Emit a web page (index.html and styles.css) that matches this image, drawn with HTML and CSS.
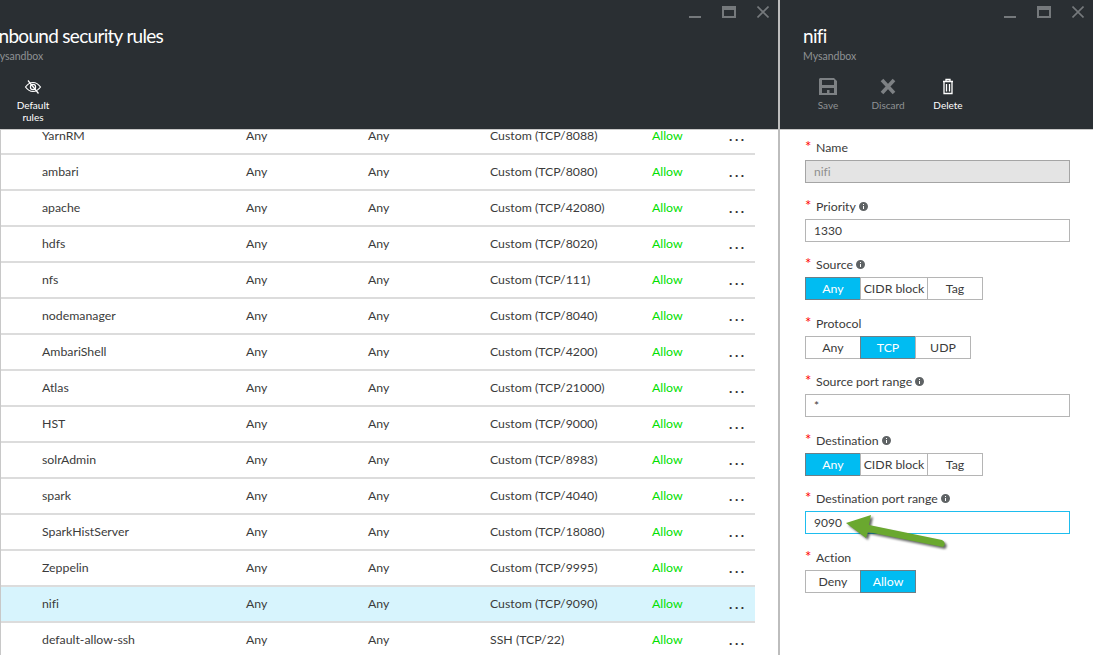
FILE: index.html
```html
<!DOCTYPE html>
<html lang="en">
<head>
  <meta charset="UTF-8">
  <title>Inbound security rules</title>
  <link rel="stylesheet" href="styles.css">
</head>
<body>

  <div class="blade blade-rules">
    <header class="blade-head">
      <div class="win-controls">
        <svg class="win-min" width="12" height="12" viewBox="0 0 12 12"><rect y="10" width="12" height="2"/></svg>
        <svg class="win-max" width="14" height="12" viewBox="0 0 14 12"><path d="M0 0h14v12H0zM2 4v6h10V4z" fill-rule="evenodd"/></svg>
        <svg class="win-close" width="12" height="12" viewBox="0 0 12 12"><path d="M.5.5l11 11M11.5.5l-11 11" fill="none" stroke-width="1.6"/></svg>
      </div>
      <h1 class="title title-clipped">Inbound security rules</h1>
      <div class="subtitle subtitle-clipped">Mysandbox</div>
      <div class="toolbar toolbar-rules">
        <div class="tool tool-on">
          <svg width="18" height="17" viewBox="0 0 18 17" fill="none" stroke="#fff" stroke-width="1.2"><path d="M1.500 9C4 5.500 6.500 4.500 9 4.500S14 5.500 16.500 9C14 12.500 11.500 13.500 9 13.500S4 12.500 1.500 9z"/><circle cx="9" cy="9" r="2.600"/><path d="M4 2.500l10.500 13"/></svg>
          <span>Default rules</span>
        </div>
      </div>
    </header>

    <div class="rules">
      <div class="row"><span>YarnRM</span><span>Any</span><span>Any</span><span>Custom (TCP/8088)</span><span class="allow">Allow</span><span class="dots">...</span></div>
      <div class="row"><span>ambari</span><span>Any</span><span>Any</span><span>Custom (TCP/8080)</span><span class="allow">Allow</span><span class="dots">...</span></div>
      <div class="row"><span>apache</span><span>Any</span><span>Any</span><span>Custom (TCP/42080)</span><span class="allow">Allow</span><span class="dots">...</span></div>
      <div class="row"><span>hdfs</span><span>Any</span><span>Any</span><span>Custom (TCP/8020)</span><span class="allow">Allow</span><span class="dots">...</span></div>
      <div class="row"><span>nfs</span><span>Any</span><span>Any</span><span>Custom (TCP/111)</span><span class="allow">Allow</span><span class="dots">...</span></div>
      <div class="row"><span>nodemanager</span><span>Any</span><span>Any</span><span>Custom (TCP/8040)</span><span class="allow">Allow</span><span class="dots">...</span></div>
      <div class="row"><span>AmbariShell</span><span>Any</span><span>Any</span><span>Custom (TCP/4200)</span><span class="allow">Allow</span><span class="dots">...</span></div>
      <div class="row"><span>Atlas</span><span>Any</span><span>Any</span><span>Custom (TCP/21000)</span><span class="allow">Allow</span><span class="dots">...</span></div>
      <div class="row"><span>HST</span><span>Any</span><span>Any</span><span>Custom (TCP/9000)</span><span class="allow">Allow</span><span class="dots">...</span></div>
      <div class="row"><span>solrAdmin</span><span>Any</span><span>Any</span><span>Custom (TCP/8983)</span><span class="allow">Allow</span><span class="dots">...</span></div>
      <div class="row"><span>spark</span><span>Any</span><span>Any</span><span>Custom (TCP/4040)</span><span class="allow">Allow</span><span class="dots">...</span></div>
      <div class="row"><span>SparkHistServer</span><span>Any</span><span>Any</span><span>Custom (TCP/18080)</span><span class="allow">Allow</span><span class="dots">...</span></div>
      <div class="row"><span>Zeppelin</span><span>Any</span><span>Any</span><span>Custom (TCP/9995)</span><span class="allow">Allow</span><span class="dots">...</span></div>
      <div class="row row-selected"><span>nifi</span><span>Any</span><span>Any</span><span>Custom (TCP/9090)</span><span class="allow">Allow</span><span class="dots">...</span></div>
      <div class="row"><span>default-allow-ssh</span><span>Any</span><span>Any</span><span>SSH (TCP/22)</span><span class="allow">Allow</span><span class="dots">...</span></div>
    </div>
  </div>

  <div class="blade blade-edit">
    <header class="blade-head">
      <div class="win-controls">
        <svg class="win-min" width="12" height="12" viewBox="0 0 12 12"><rect y="10" width="12" height="2"/></svg>
        <svg class="win-max" width="14" height="12" viewBox="0 0 14 12"><path d="M0 0h14v12H0zM2 4v6h10V4z" fill-rule="evenodd"/></svg>
        <svg class="win-close" width="12" height="12" viewBox="0 0 12 12"><path d="M.5.5l11 11M11.5.5l-11 11" fill="none" stroke-width="1.6"/></svg>
      </div>
      <h1 class="title">nifi</h1>
      <div class="subtitle">Mysandbox</div>
      <div class="toolbar">
        <div class="tool">
          <svg width="18" height="17" viewBox="0 0 18 17" fill="#7d8184"><path d="M1 0h14l3 3v14H0V1zM3 2v5h12V2zM3 10v5h3v-5zM6 10v5h6v-5zM12 10v5h3v-5z" fill-rule="evenodd"/><rect x="8" y="12" width="2.500" height="3"/></svg>
          <span>Save</span>
        </div>
        <div class="tool">
          <svg width="18" height="17" viewBox="0 0 18 17" fill="none" stroke="#7d8184" stroke-width="3.600"><path d="M3 2l12 13M15 2L3 15"/></svg>
          <span>Discard</span>
        </div>
        <div class="tool tool-on">
          <svg width="18" height="17" viewBox="0 0 18 17" fill="none" stroke="#fff" stroke-width="1.300"><path d="M4 3.500h10M7 3V1.500h4V3M5 3.500V15.500h8V3.500M7.500 6v7.500M10.500 6v7.500"/></svg>
          <span>Delete</span>
        </div>
      </div>
    </header>

    <form class="form">
      <div class="field">
        <label><i>*</i>Name</label>
        <div class="input input-off">nifi</div>
      </div>
      <div class="field">
        <label><i>*</i>Priority <svg class="info" viewBox="0 0 9 9"><path d="M4.500 0a4.500 4.500 0 1 0 0 9a4.500 4.500 0 0 0 0-9zM4 2h1v1H4zM4 4h1v3H4z" fill-rule="evenodd"/></svg></label>
        <div class="input">1330</div>
      </div>
      <div class="field">
        <label><i>*</i>Source <svg class="info" viewBox="0 0 9 9"><path d="M4.500 0a4.500 4.500 0 1 0 0 9a4.500 4.500 0 0 0 0-9zM4 2h1v1H4zM4 4h1v3H4z" fill-rule="evenodd"/></svg></label>
        <div class="seg"><span class="on">Any</span><span class="wide">CIDR block</span><span>Tag</span></div>
      </div>
      <div class="field">
        <label><i>*</i>Protocol</label>
        <div class="seg"><span>Any</span><span class="on">TCP</span><span>UDP</span></div>
      </div>
      <div class="field">
        <label><i>*</i>Source port range <svg class="info" viewBox="0 0 9 9"><path d="M4.500 0a4.500 4.500 0 1 0 0 9a4.500 4.500 0 0 0 0-9zM4 2h1v1H4zM4 4h1v3H4z" fill-rule="evenodd"/></svg></label>
        <div class="input">*</div>
      </div>
      <div class="field">
        <label><i>*</i>Destination <svg class="info" viewBox="0 0 9 9"><path d="M4.500 0a4.500 4.500 0 1 0 0 9a4.500 4.500 0 0 0 0-9zM4 2h1v1H4zM4 4h1v3H4z" fill-rule="evenodd"/></svg></label>
        <div class="seg"><span class="on">Any</span><span class="wide">CIDR block</span><span>Tag</span></div>
      </div>
      <div class="field">
        <label><i>*</i>Destination port range <svg class="info" viewBox="0 0 9 9"><path d="M4.500 0a4.500 4.500 0 1 0 0 9a4.500 4.500 0 0 0 0-9zM4 2h1v1H4zM4 4h1v3H4z" fill-rule="evenodd"/></svg></label>
        <div class="input input-focus">9090</div>
      </div>
      <div class="field">
        <label><i>*</i>Action</label>
        <div class="seg"><span>Deny</span><span class="on">Allow</span></div>
      </div>

      <!-- strzalka z adnotacji -->
      <svg class="arrow" width="110" height="40" viewBox="0 0 110 40">
        <path class="arrow-body" d="M5 8L30 0 28 10 101 25Q106 28 102 32L27 17 25 23z"/>
      </svg>
    </form>
  </div>

</body>
</html>
```

FILE: styles.css
```css
html, body {
  height: 100%;
}
body {
  margin: 0;
  display: flex;
  overflow: hidden;
  background-color: #fff;
  color: #3b3b3b;
  font-family: Lato, "Open Sans", sans-serif;
  font-size: 12.3px;
  font-variant-ligatures: none;
}
.blade {
  display: flex;
  flex-direction: column;
  overflow: hidden;
  height: 655px;
}
.blade-rules {
  width: 778px;
  border-right: 2px solid #bdbdbd;
}
.blade-edit {
  flex: 1;
  position: relative;
}

/* naglowek */
.blade-head {
  position: relative;
  z-index: 1;
  flex: none;
  box-sizing: border-box;
  height: 130px;
  padding: 6px 0 0 23px;
  background-color: #2a2f33;
  border-bottom: 1px solid #c8c8c8;
  color: #fff;
}
.win-controls {
  display: flex;
  justify-content: flex-end;
  gap: 21px;
  height: 12px;
  padding-right: 9px;
}
.win-controls svg {
  fill: #75797c;
  stroke: #75797c;
  stroke-width: 0;
}
.win-controls .win-close {
  stroke-width: 1.6;
  fill: none;
}
.title {
  margin: 6px 0 0;
  font-size: 19px;
  font-weight: 400;
  letter-spacing: -0.7px;
  line-height: 24px;
}
.title-clipped {
  margin-left: -29px;
}
.subtitle {
  margin-top: 1px;
  color: #8f9294;
  font-size: 10.5px;
  line-height: 14px;
}
.subtitle-clipped {
  margin-left: -33px;
}
.toolbar {
  display: flex;
  margin: 15px 0 0 -5px;
}
.toolbar-rules {
  margin-left: -20px;
}
.tool {
  width: 60px;
  text-align: center;
  color: #8f9294;
  font-size: 10px;
  line-height: 12px;
}
.tool svg {
  display: block;
  margin: 0 auto 4px;
}
.tool span {
  display: block;
  padding: 0 8px;
}
.tool-on {
  color: #fff;
}

/* lista regul */
.rules {
  flex: 1;
  margin-top: -11px;
  width: 755px;
  border-left: 1px solid #c8c8c8;
  box-sizing: border-box;
}
.row {
  display: grid;
  grid-template-columns: 204px 122px 122px 162px 77px 1fr;
  box-sizing: border-box;
  height: 36px;
  padding: 8px 0 0 41px;
  border-bottom: 2px solid #dcdcdc;
  line-height: 18px;
}
.row-selected {
  background-color: #d7f4fd;
}
.allow {
  color: #00e000;
}
.dots {
  color: #333;
  font-size: 14px;
  font-weight: 700;
  line-height: 18px;
  letter-spacing: 2.6px;
}

/* formularz */
.form {
  padding: 10px 23px 0 25px;
}
.field {
  height: 58.57px;
}
.field label {
  display: block;
  height: 16px;
  margin-bottom: 4px;
  line-height: 16px;
  color: #3b3b3b;
}
.field label i {
  display: inline-block;
  width: 11px;
  color: #f00;
  font-size: 15px;
  font-style: normal;
  line-height: 12px;
}
.info {
  width: 9px;
  height: 9px;
  fill: #5f6365;
  vertical-align: 0;
}
.input {
  box-sizing: border-box;
  height: 23px;
  padding-left: 8px;
  border: 1px solid #b5b5b5;
  font-size: 12px;
  line-height: 21px;
}
.input-off {
  background-color: #e4e4e4;
  border-color: #a5a5a5;
  color: #8f8f8f;
}
.input-focus {
  border-color: #1ebdee;
}
.seg {
  display: flex;
  height: 23px;
}
.seg span {
  box-sizing: border-box;
  width: 56px;
  margin-right: -1px;
  border: 1px solid #b5b5b5;
  line-height: 21px;
  text-align: center;
}
.seg .wide {
  width: 68px;
}
.seg .on {
  background-color: #00bcf2;
  border-color: #6d7f87;
  color: #fff;
}
.arrow {
  position: absolute;
  left: 61px;
  top: 515px;
  overflow: visible;
  filter: drop-shadow(2px 2px 1px rgba(20, 25, 20, 0.65));
}
.arrow-body {
  fill: #6aa82f;
}
```
